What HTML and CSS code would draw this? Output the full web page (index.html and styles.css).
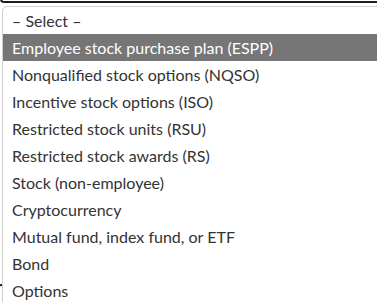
FILE: index.html
```html
<!DOCTYPE html>
<html>
<head>
<meta charset="utf-8">
<link rel="stylesheet" href="styles.css">
</head>
<body>
<div class="page">
  <div class="select-edge"></div>
  <ul class="listbox">
    <li class="opt">– Select –</li>
    <li class="opt active">Employee stock purchase plan (ESPP)</li>
    <li class="opt">Nonqualified stock options (NQSO)</li>
    <li class="opt">Incentive stock options (ISO)</li>
    <li class="opt">Restricted stock units (RSU)</li>
    <li class="opt">Restricted stock awards (RS)</li>
    <li class="opt">Stock (non-employee)</li>
    <li class="opt">Cryptocurrency</li>
    <li class="opt">Mutual fund, index fund, or ETF</li>
    <li class="opt">Bond</li>
    <li class="opt">Options</li>
  </ul>
  <div class="behind-edge"></div>
</div>
</body>
</html>
```
FILE: styles.css
```css
html, body {
  margin: 0;
  padding: 0;
  background: #ffffff;
  overflow: hidden;
}
.page {
  position: relative;
  width: 377px;
  height: 302px;
  overflow: hidden;
  font-family: Lato, "Noto Sans", sans-serif;
}
.select-edge {
  height: 2px;
  margin-top: -1px;
  margin-right: -10px;
  border: 2px solid #1c1c1c;
  border-top: none;
  border-radius: 0 0 6px 6px;
}
.listbox {
  list-style: none;
  margin: 3px -10px 0 2px;
  padding: 0;
  border: 1px solid #cfcfcf;
  border-radius: 5px 5px 0 0;
  background: #ffffff;
  position: relative;
  z-index: 1;
}
.opt {
  height: 27px;
  line-height: 27px;
  padding-left: 9px;
  font-size: 16px;
  color: #333333;
  white-space: nowrap;
}
.opt.active {
  background: #767676;
  color: #ffffff;
}
.behind-edge {
  position: absolute;
  left: -4px;
  top: 284px;
  width: 8px;
  height: 30px;
  border: 2px solid #1c1c1c;
  border-radius: 6px;
}
```
